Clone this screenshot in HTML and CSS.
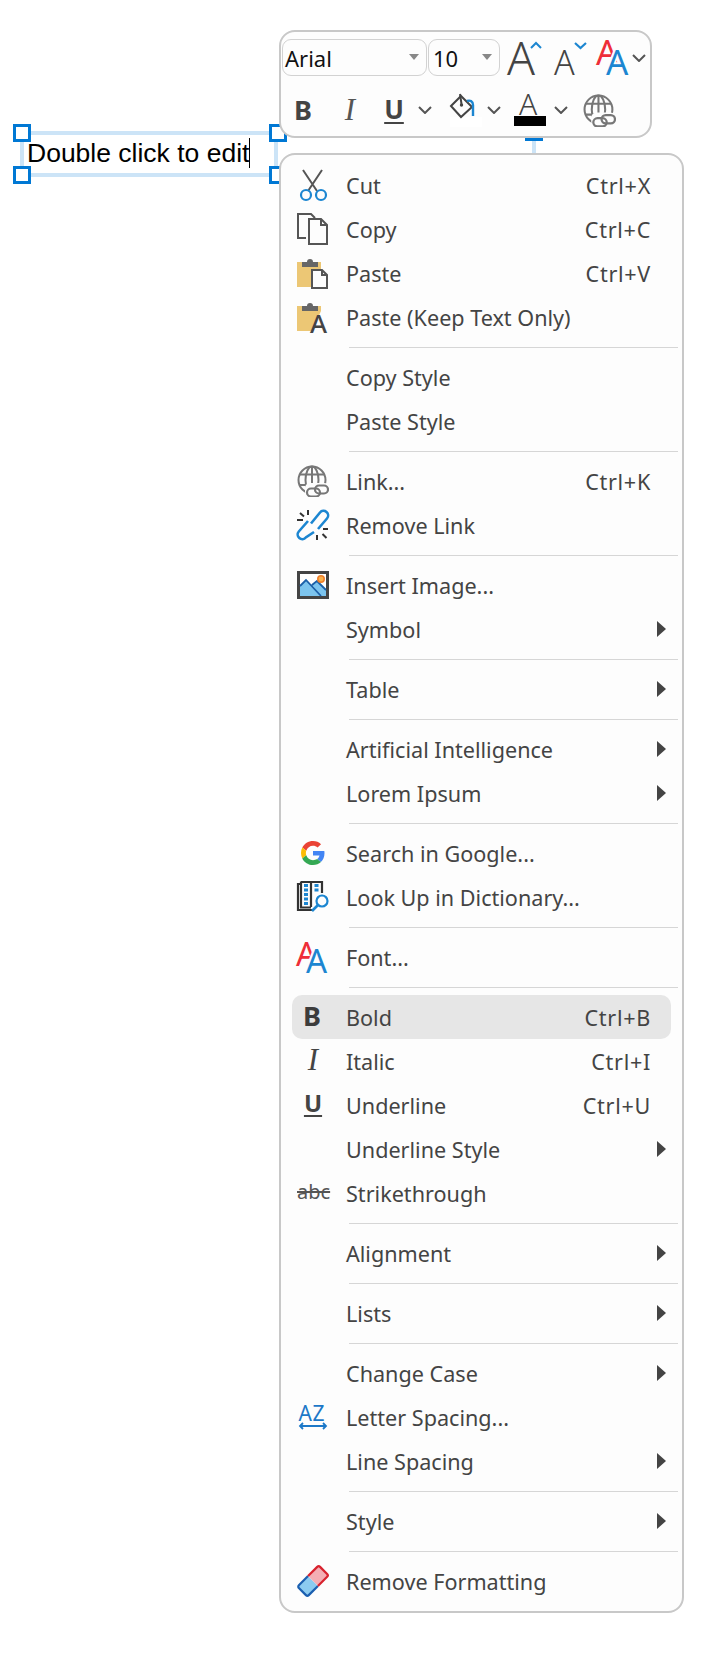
FILE: index.html
```html
<!DOCTYPE html>
<html lang="en">
<head>
<meta charset="utf-8">
<title>Editor context menu</title>
<link rel="stylesheet" href="styles.css">
</head>
<body>
<svg class="defs" aria-hidden="true">
  <symbol id="chev" viewBox="0 0 14 8"><path d="M1 1l6 6 6-6" fill="none" stroke="#555" stroke-width="2"/></symbol>
  <symbol id="globe" viewBox="0 0 32 32">
    <g fill="none" stroke="#777" stroke-width="2">
      <circle cx="15" cy="15" r="13.5"/><ellipse cx="15" cy="15" rx="6.5" ry="13.5"/><path d="M15 1.500v27M2.500 9.500h25M2 20h26"/>
    </g>
    <rect x="8" y="18" width="24" height="14" rx="5" fill="#fdfdfd"/>
    <g fill="none" stroke="#777" stroke-width="2.200">
      <rect x="10" y="23.500" width="13" height="8" rx="4"/><rect x="18" y="20.500" width="13" height="8" rx="4"/>
    </g>
  </symbol>
  <symbol id="clip" viewBox="0 0 32 32">
    <rect x="0" y="5" width="24" height="25" fill="#ecc775"/>
    <path d="M5 10V5h5a3 3 0 0 1 6 0h5v5z" fill="#666"/>
  </symbol>
</svg>

<div class="editor">
  <div class="frame"><span class="edit-text">Double click to edit</span><span class="caret"></span></div>
  <i class="handle h-tl"></i><i class="handle h-bl"></i><i class="handle h-tr"></i><i class="handle h-br"></i>
  <i class="stem"></i><i class="handle h-top"></i>
</div>

<div class="toolbar">
  <div class="tb-row tb-top">
    <div class="select sel-font"><span>Arial</span><i class="drop"></i></div>
    <div class="select sel-size"><span>10</span><i class="drop"></i></div>
    <svg class="t-grow" viewBox="0 0 36 37"><text class="glyph big" x="0" y="36">A</text><path d="M24 9l5-5 5 5" fill="none" stroke="#1c86d1" stroke-width="2"/></svg>
    <svg class="t-shrink" viewBox="0 0 34 37"><text class="glyph mid" x="0" y="36">A</text><path d="M21 4l5.500 5 5.500-5" fill="none" stroke="#1c86d1" stroke-width="2.200"/></svg>
    <svg class="t-color" viewBox="0 0 34 37"><text class="glyph red" x="-1" y="26">A</text><text class="glyph blue" x="9" y="35.500">A</text></svg>
    <svg class="chev t-c0"><use href="#chev"/></svg>
  </div>
  <div class="tb-row tb-bottom">
    <span class="tool-b">B</span>
    <span class="tool-i">I</span>
    <span class="tool-u">U</span>
    <svg class="chev t-c1"><use href="#chev"/></svg>
    <svg class="t-bucket" viewBox="0 0 32 34">
      <rect x="0" y="24" width="32" height="10" fill="#fff"/>
      <path d="M1 13L11 3l11 11-11 10z" fill="none" stroke="#444" stroke-width="2"/>
      <path d="M10 1l1.500 10" stroke="#444" stroke-width="2"/><circle cx="11.500" cy="12" r="1.700" fill="#444"/>
      <path d="M17 8c3-1 6 0 6 4v11" fill="none" stroke="#1c86d1" stroke-width="2.400"/>
    </svg>
    <svg class="chev t-c2"><use href="#chev"/></svg>
    <div class="t-textcolor"><svg viewBox="0 0 32 22"><text class="glyph tc" x="5" y="21">A</text></svg><i class="swatch"></i></div>
    <svg class="chev t-c3"><use href="#chev"/></svg>
    <svg class="t-globe"><use href="#globe"/></svg>
  </div>
</div>

<div class="menu">
  <div class="row"><svg class="ic" viewBox="0 0 32 32"><path d="M6 1l14 21M25 1L11 22" stroke="#555" stroke-width="2" fill="none"/><circle cx="9" cy="26" r="5" fill="none" stroke="#1c86d1" stroke-width="2.200"/><circle cx="24" cy="26" r="5" fill="none" stroke="#1c86d1" stroke-width="2.200"/></svg><span class="label">Cut</span><span class="key">Ctrl+X</span></div>
  <div class="row"><svg class="ic" viewBox="0 0 32 32"><path d="M9 25H1V1h13l4 4" fill="none" stroke="#555" stroke-width="2"/><path d="M12 6h12l6 6v19H12z" fill="#fdfdfd" stroke="#555" stroke-width="2"/><path d="M24 6v6h6" fill="none" stroke="#555" stroke-width="2"/></svg><span class="label">Copy</span><span class="key">Ctrl+C</span></div>
  <div class="row"><svg class="ic" viewBox="0 0 32 32"><use href="#clip"/><path d="M15 13h10l5 5v13H15z" fill="#fdfdfd" stroke="#555" stroke-width="2"/><path d="M25 13v5h5" fill="none" stroke="#555" stroke-width="2"/></svg><span class="label">Paste</span><span class="key">Ctrl+V</span></div>
  <div class="row"><svg class="ic" viewBox="0 0 32 32"><use href="#clip"/><path d="M24 10L14 32h18V10z" fill="#fdfdfd"/><text class="glyph pa" x="13" y="32">A</text></svg><span class="label">Paste (Keep Text Only)</span></div>
  <div class="sep"></div>
  <div class="row"><i class="ic"></i><span class="label">Copy Style</span></div>
  <div class="row"><i class="ic"></i><span class="label">Paste Style</span></div>
  <div class="sep"></div>
  <div class="row"><svg class="ic"><use href="#globe"/></svg><span class="label">Link...</span><span class="key">Ctrl+K</span></div>
  <div class="row"><svg class="ic" viewBox="0 0 32 32"><g fill="none" stroke="#1c86d1" stroke-width="2.600"><path d="M14 14.500L23 3.500a4.600 4.600 0 0 1 7 6L21 20"/><path d="M11 12L1.800 22.500a4.600 4.600 0 0 0 7 6L17 23"/></g><path d="M11 1v5M3 4l4 3.500M0 11h6M26 20h5M25.500 25l4 4M20 26v5" stroke="#333" stroke-width="2" fill="none"/></svg><span class="label">Remove Link</span></div>
  <div class="sep"></div>
  <div class="row"><svg class="ic" viewBox="0 0 32 32"><rect x="1.500" y="3.500" width="29" height="25" fill="#fff" stroke="#444" stroke-width="3"/><path d="M3 17l6-6 15 16H3z" fill="#7cc4ee"/><path d="M15 16l5-4 9 9v6h-5z" fill="#7cc4ee"/><path d="M3 17l6-6 15 16M15 16l5-4 9 9" fill="none" stroke="#1a5fa8" stroke-width="1.800"/><circle cx="24" cy="10" r="3.200" fill="#f9b24c" stroke="#ee7f2b" stroke-width="1.600"/></svg><span class="label">Insert Image...</span></div>
  <div class="row"><i class="ic"></i><span class="label">Symbol</span><i class="arrow"></i></div>
  <div class="sep"></div>
  <div class="row"><i class="ic"></i><span class="label">Table</span><i class="arrow"></i></div>
  <div class="sep"></div>
  <div class="row"><i class="ic"></i><span class="label">Artificial Intelligence</span><i class="arrow"></i></div>
  <div class="row"><i class="ic"></i><span class="label">Lorem Ipsum</span><i class="arrow"></i></div>
  <div class="sep"></div>
  <div class="row"><svg class="ic" viewBox="0 0 32 32"><g transform="translate(4 4) scale(.5)"><path fill="#EA4335" d="M24 9.500c3.540 0 6.710 1.220 9.210 3.600l6.850-6.850C35.900 2.380 30.470 0 24 0 14.620 0 6.510 5.380 2.560 13.220l7.980 6.190C12.430 13.720 17.740 9.500 24 9.500z"/><path fill="#4285F4" d="M46.980 24.550c0-1.570-.15-3.090-.38-4.550H24v9.020h12.940c-.58 2.960-2.260 5.480-4.780 7.180l7.730 6c4.510-4.180 7.090-10.360 7.090-17.650z"/><path fill="#FBBC05" d="M10.530 28.590c-.48-1.450-.76-2.990-.76-4.590s.27-3.140.76-4.590l-7.980-6.190C.92 16.460 0 20.120 0 24c0 3.880.92 7.540 2.560 10.780l7.970-6.190z"/><path fill="#34A853" d="M24 48c6.480 0 11.930-2.130 15.890-5.810l-7.730-6c-2.150 1.450-4.920 2.300-8.160 2.300-6.260 0-11.570-4.220-13.470-9.910l-7.980 6.190C6.510 42.620 14.620 48 24 48z"/></g></svg><span class="label">Search in Google...</span></div>
  <div class="row"><svg class="ic" viewBox="0 0 32 32"><g fill="none" stroke="#333" stroke-width="2.200"><path d="M4 3H1v26h15"/><path d="M4 0.500v26h10"/><path d="M4 1h10v25M14 1h11v11"/></g><path d="M9 3v21M19.500 3v9" stroke="#1c86d1" stroke-width="4" stroke-dasharray="3 1.500" fill="none"/><circle cx="25" cy="20" r="5.500" fill="#fdfdfd" stroke="#1c86d1" stroke-width="2.200"/><path d="M21 24l-6 6" stroke="#1c86d1" stroke-width="2.600"/></svg><span class="label">Look Up in Dictionary...</span></div>
  <div class="sep"></div>
  <div class="row"><svg class="ic" viewBox="0 0 32 32"><text class="glyph fred" x="-1" y="25">A</text><text class="glyph fblue" x="9" y="32">A</text></svg><span class="label">Font...</span></div>
  <div class="sep"></div>
  <div class="row active"><span class="ic ic-b">B</span><span class="label">Bold</span><span class="key">Ctrl+B</span></div>
  <div class="row"><span class="ic ic-i">I</span><span class="label">Italic</span><span class="key">Ctrl+I</span></div>
  <div class="row"><span class="ic ic-u">U</span><span class="label">Underline</span><span class="key">Ctrl+U</span></div>
  <div class="row"><i class="ic"></i><span class="label">Underline Style</span><i class="arrow"></i></div>
  <div class="row"><span class="ic ic-s">abc</span><span class="label">Strikethrough</span></div>
  <div class="sep"></div>
  <div class="row"><i class="ic"></i><span class="label">Alignment</span><i class="arrow"></i></div>
  <div class="sep"></div>
  <div class="row"><i class="ic"></i><span class="label">Lists</span><i class="arrow"></i></div>
  <div class="sep"></div>
  <div class="row"><i class="ic"></i><span class="label">Change Case</span><i class="arrow"></i></div>
  <div class="row"><svg class="ic" viewBox="0 0 32 32"><text class="glyph az" x="1.500" y="20">AZ</text><path d="M3 25h26M6 22l-3 3 3 3M26 22l3 3-3 3" fill="none" stroke="#1c78c8" stroke-width="1.800"/></svg><span class="label">Letter Spacing...</span></div>
  <div class="row"><i class="ic"></i><span class="label">Line Spacing</span><i class="arrow"></i></div>
  <div class="sep"></div>
  <div class="row"><i class="ic"></i><span class="label">Style</span><i class="arrow"></i></div>
  <div class="sep"></div>
  <div class="row"><svg class="ic" viewBox="0 0 32 32"><g transform="rotate(-45 16 16)"><rect x="1" y="9" width="15" height="14" rx="2" fill="#8ccbf0"/><rect x="16" y="9" width="15" height="14" rx="2" fill="#f4aeb4"/><path d="M16 9H3a2 2 0 0 0-2 2v10a2 2 0 0 0 2 2h13" fill="none" stroke="#1b5fb0" stroke-width="2.200"/><path d="M16 9h13a2 2 0 0 1 2 2v10a2 2 0 0 1-2 2H16" fill="none" stroke="#d8222e" stroke-width="2.200"/></g></svg><span class="label">Remove Formatting</span></div>
</div>
</body>
</html>
```
FILE: styles.css
```css
* { box-sizing: border-box; }
html, body { margin: 0; padding: 0; background: #fff; }
body { position: relative; width: 714px; height: 1654px; overflow: hidden; font-family: "Noto Sans", "Open Sans", sans-serif; color: #444; }
.defs { position: absolute; width: 0; height: 0; }
i { display: block; }
svg { overflow: visible; }

/* canvas object */
.editor { position: absolute; left: 0; top: 0; width: 600px; height: 190px; }
.frame { position: absolute; left: 20px; top: 131px; width: 258px; height: 46px; border: 4px solid #cce4f7; background: #fff; display: flex; align-items: center; padding: 0 0 2px 3px; }
.edit-text { font-family: "Liberation Sans", Arial, sans-serif; font-size: 26.5px; color: #000; line-height: 30px; white-space: nowrap; }
.caret { width: 1px; height: 30px; background: #000; }
.handle { position: absolute; width: 18px; height: 18px; background: #fff; border: 3px solid #0078d4; }
.h-tl { left: 13px; top: 124px; }
.h-bl { left: 13px; top: 166px; }
.h-tr { left: 269px; top: 124px; }
.h-br { left: 269px; top: 166px; }
.h-top { left: 525px; top: 123px; }
.stem { position: absolute; left: 532px; top: 140px; width: 4px; height: 16px; background: #cce4f7; }

/* floating toolbar */
.toolbar { position: absolute; left: 279px; top: 30px; width: 373px; height: 108px; background: #fdfdfd; border: 2px solid #c8c8c8; border-radius: 16px; padding: 7px 0 0 1px; display: flex; flex-direction: column; }
.tb-row { display: flex; align-items: center; }
.tb-top { height: 37px; }
.tb-bottom { height: 38px; margin-top: 15px; }
.select { height: 37px; border: 1px solid #d2d2d2; border-radius: 9px; display: flex; align-items: center; justify-content: space-between; font-size: 22px; color: #111; padding: 1px 7px 0 2px; }
.sel-font { width: 145px; }
.sel-size { width: 72px; margin-left: 1px; padding-left: 4px; }
.drop { width: 0; height: 0; border-left: 5px solid transparent; border-right: 5px solid transparent; border-top: 6px solid #888; margin-top: -2px; }
.t-grow { width: 36px; height: 37px; margin-left: 7px; }
.t-shrink { width: 34px; height: 37px; margin-left: 11px; }
.t-color { width: 34px; height: 37px; margin-left: 9px; }
.chev { width: 14px; height: 8px; }
.t-c0 { margin-left: 1px; }
.t-c1 { margin-left: 11px; }
.t-c2 { margin-left: 5px; }
.t-c3 { margin-left: 8px; }
.tool-b { width: 30px; margin-left: 6px; text-align: center; font-weight: 700; font-size: 27px; line-height: 38px; color: #444; }
.tool-i { width: 28px; margin-left: 18px; text-align: center; font-family: "Liberation Serif", serif; font-style: italic; font-size: 31px; line-height: 38px; color: #555; }
.tool-u { width: 26px; margin-left: 17px; text-align: center; font-weight: 700; font-size: 26px; line-height: 32px; height: 34px; color: #444; text-decoration: underline; text-underline-offset: 3px; text-decoration-thickness: 2px; }
.t-bucket { width: 32px; height: 34px; margin-left: 18px; }
.t-textcolor { width: 32px; margin-left: 13px; display: flex; flex-direction: column; align-items: center; }
.t-textcolor svg { width: 32px; height: 22px; }
.swatch { width: 32px; height: 10px; background: #000; }
.t-globe { width: 33px; height: 33px; margin-left: 15px; }

/* svg letter glyphs */
.glyph { font-family: "Noto Sans", sans-serif; font-weight: 300; fill: #444; }
.big { font-size: 46px; }
.mid { font-size: 34px; }
.fred { font-size: 33px; fill: #ee2e38; font-weight: 400; }
.red { font-size: 35px; fill: #ee2e38; font-weight: 400; }
.fblue { font-size: 33px; fill: #1c86d1; font-weight: 400; stroke: #fdfdfd; stroke-width: 4px; paint-order: stroke; }
.blue { font-size: 35px; fill: #1c86d1; font-weight: 400; stroke: #fdfdfd; stroke-width: 4px; paint-order: stroke; }
.tc { font-size: 30px; }
.pa { font-size: 26px; font-weight: 500; fill: #444; }
.az { font-size: 21px; font-weight: 400; fill: #1c78c8; letter-spacing: .5px; }

/* context menu */
.menu { position: absolute; left: 279px; top: 153px; width: 405px; height: 1460px; background: #fdfdfd; border: 2px solid #c8c8c8; border-radius: 16px; padding: 8px 11px 0 11px; }
.row { height: 44px; display: flex; align-items: center; padding-left: 5px; font-size: 21.6px; border-radius: 10px; }
.row.active { background: #e6e6e6; }
.ic { width: 32px; height: 32px; flex: none; display: block; text-align: center; }
.label { margin-left: 17px; flex: 1; white-space: nowrap; color: #444; }
.key { margin-right: 20px; color: #444; white-space: nowrap; letter-spacing: .7px; }
.arrow { width: 0; height: 0; border-left: 9px solid #444; border-top: 8.500px solid transparent; border-bottom: 8.500px solid transparent; margin-right: 5px; }
.sep { height: 1px; margin: 8px -7px 7px 57px; background: #d6d6d6; }
.ic-b { font-weight: 700; font-size: 27px; line-height: 30px; color: #3c3c3c; padding-right: 2px; }
.ic-i { font-family: "Liberation Serif", serif; font-style: italic; font-size: 31px; line-height: 30px; color: #444; }
.ic-u { font-weight: 700; font-size: 24px; line-height: 28px; color: #444; text-decoration: underline; text-underline-offset: 3px; text-decoration-thickness: 2px; }
.ic-s { font-size: 20px; line-height: 30px; color: #555; text-decoration: line-through; }
```
